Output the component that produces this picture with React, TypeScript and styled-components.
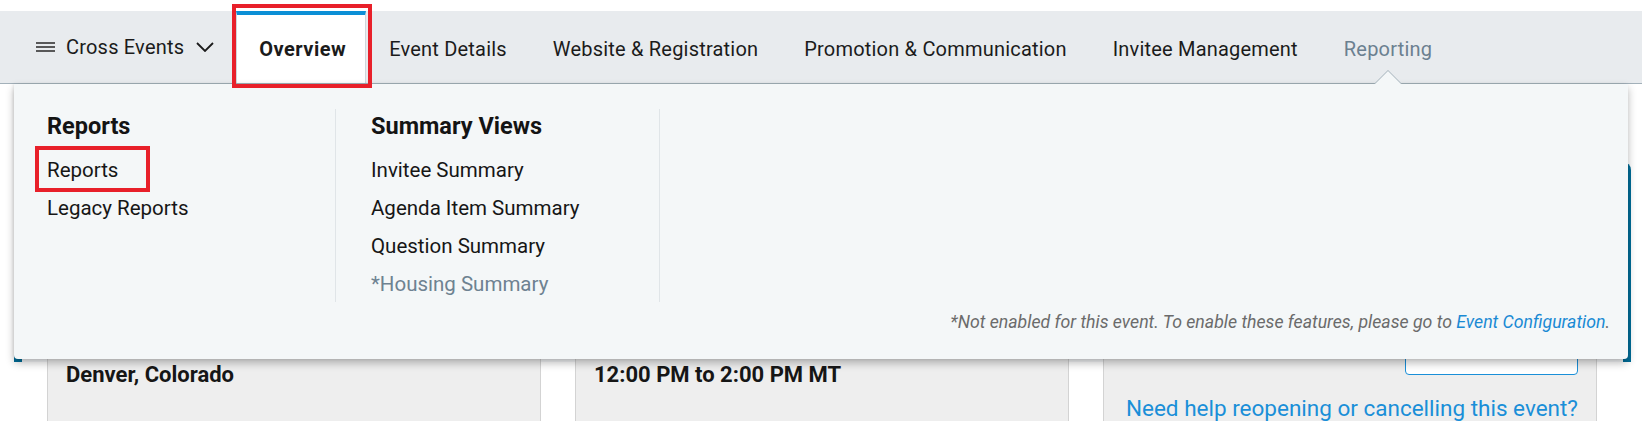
import React from "react";
import styled, { createGlobalStyle } from "styled-components";

const Global = createGlobalStyle`
  html, body { margin: 0; padding: 0; background: #ffffff; }
  body { font-family: Roboto, "Noto Sans", Arial, sans-serif; color: #1b1b1b; }
  * { box-sizing: border-box; }
`;

const Stage = styled.div`
  position: relative;
  width: 1642px;
  height: 423px;
  overflow: hidden;
  background: #ffffff;
  padding-top: 11px;
`;

const NavBar = styled.nav`
  display: flex;
  align-items: stretch;
  height: 73px;
  background: #e8ebee;
  border-bottom: 1px solid #a3b1ba;
  padding-left: 36px;
`;

const CrossEvents = styled.div`
  display: flex;
  align-items: center;
  padding-right: 22px;
  font-size: 20px;
  letter-spacing: 0.2px;
  color: #1b1b1b;
`;

const CrossLabel = styled.span`
  margin: 0 12px 0 11px;
`;

const Tab = styled.div<{ $active?: boolean; $muted?: boolean }>`
  position: relative;
  display: flex;
  align-items: center;
  padding: ${(p) => (p.$active ? "0 19px 0 22px" : "0 22px")};
  font-size: 20px;
  letter-spacing: ${(p) => (p.$active ? "0.5px" : "0.2px")};
  font-weight: ${(p) => (p.$active ? 700 : 400)};
  color: ${(p) => (p.$muted ? "#6b8090" : "#1b1b1b")};
  background: ${(p) => (p.$active ? "#ffffff" : "transparent")};
  border-top: 4px solid ${(p) => (p.$active ? "#0b8fd6" : "transparent")};
  border-left: 1px solid ${(p) => (p.$active ? "#cfd6db" : "transparent")};
  border-right: 1px solid ${(p) => (p.$active ? "#cfd6db" : "transparent")};
`;

const Caret = styled.span`
  position: absolute;
  left: 50%;
  bottom: -1px;
  width: 0;
  height: 0;
  transform: translateX(-50%);
  border-left: 14px solid transparent;
  border-right: 14px solid transparent;
  border-bottom: 14px solid #a3b1ba;
  z-index: 6;

  &::after {
    content: "";
    position: absolute;
    left: -13px;
    top: 1px;
    width: 0;
    height: 0;
    border-left: 13px solid transparent;
    border-right: 13px solid transparent;
    border-bottom: 13px solid #f4f7f8;
  }
`;

/* ---------- page behind the menu ---------- */

const PageFrame = styled.section`
  margin: 78px 11px 0 14px;
  height: 200px;
  padding: 130px 26px 0 25px;
  background: #f4f6f8;
  border-left: 8px solid #006d98;
  border-right: 8px solid #006d98;
  border-top-right-radius: 8px;
`;

const CardRow = styled.div`
  display: grid;
  grid-template-columns: repeat(3, 1fr);
  gap: 34px;
  height: 100%;
`;

const Card = styled.div<{ $end?: boolean }>`
  display: flex;
  flex-direction: column;
  align-items: ${(p) => (p.$end ? "flex-end" : "flex-start")};
  padding: ${(p) => (p.$end ? "42px 18px 0 18px" : "69px 18px 0 18px")};
  background: #eeeeee;
  border: 1px solid #d3d3d3;
  border-bottom: none;
`;

const CardValue = styled.div`
  font-size: 22px;
  line-height: 26px;
  font-weight: 700;
  color: #161616;
`;

const OutlineButton = styled.div`
  width: 173px;
  height: 40px;
  background: #ffffff;
  border: 1px solid #1a8fd8;
  border-radius: 4px;
`;

const HelpLink = styled.a`
  margin-top: 20px;
  font-size: 22.5px;
  line-height: 26px;
  color: #1a8fd8;
  text-decoration: none;
`;

/* ---------- the open Reporting menu ---------- */

const Menu = styled.div`
  position: absolute;
  top: 84px;
  left: 14px;
  width: 1614px;
  height: 275px;
  display: flex;
  flex-direction: column;
  background: #f4f7f8;
  border-radius: 0 0 4px 4px;
  box-shadow: 0 4px 8px rgba(0, 0, 0, 0.28), -1px 0 3px rgba(0, 0, 0, 0.08);
  z-index: 5;
`;

const Columns = styled.div`
  display: flex;
  margin-top: 25px;
  height: 193px;
`;

const Column = styled.div<{ $w: number; $pl: number }>`
  width: ${(p) => p.$w}px;
  padding: 3px 0 0 ${(p) => p.$pl}px;
  border-right: 1px solid #e0e5e8;
`;

const Heading = styled.div`
  font-size: 23.5px;
  line-height: 28px;
  font-weight: 700;
  color: #141414;
  margin-bottom: 11px;
`;

const MenuLink = styled.div<{ $disabled?: boolean }>`
  font-size: 20.5px;
  line-height: 38px;
  color: ${(p) => (p.$disabled ? "#6e8291" : "#161616")};
`;

const Footnote = styled.div`
  margin-top: 10px;
  padding-right: 18px;
  text-align: right;
  font-size: 17.7px;
  line-height: 20px;
  font-style: italic;
  color: #6b6b6b;

  a {
    color: #1a8ad4;
    text-decoration: none;
  }
`;

/* ---------- red annotation boxes ---------- */

const Highlight = styled.div<{ $x: number; $y: number; $w: number; $h: number }>`
  position: absolute;
  left: ${(p) => p.$x}px;
  top: ${(p) => p.$y}px;
  width: ${(p) => p.$w}px;
  height: ${(p) => p.$h}px;
  border: 4px solid #e8202a;
  pointer-events: none;
  z-index: 10;
`;

const Hamburger = () => (
  <svg width="19" height="10" viewBox="0 0 19 10" aria-hidden="true">
    <g stroke="#333" strokeWidth="1.6">
      <line x1="0" y1="1" x2="19" y2="1" />
      <line x1="0" y1="5" x2="19" y2="5" />
      <line x1="0" y1="9" x2="19" y2="9" />
    </g>
  </svg>
);

const Chevron = () => (
  <svg width="18" height="10" viewBox="0 0 18 10" aria-hidden="true">
    <polyline points="1,1 9,9 17,1" fill="none" stroke="#1b1b1b" strokeWidth="1.8" />
  </svg>
);

const tabs = [
  "Event Details",
  "Website & Registration",
  "Promotion & Communication",
  "Invitee Management",
];

export default function App() {
  return (
    <>
      <Global />
      <Stage>
        <NavBar>
          <CrossEvents>
            <Hamburger />
            <CrossLabel>Cross Events</CrossLabel>
            <Chevron />
          </CrossEvents>
          <Tab $active>Overview</Tab>
          {tabs.map((t) => (
            <Tab key={t}>{t}</Tab>
          ))}
          <Tab $muted>
            Reporting
            <Caret />
          </Tab>
        </NavBar>

        <PageFrame>
          <CardRow>
            <Card>
              <CardValue>Denver, Colorado</CardValue>
            </Card>
            <Card>
              <CardValue>12:00 PM to 2:00 PM MT</CardValue>
            </Card>
            <Card $end>
              <OutlineButton />
              <HelpLink href="#">Need help reopening or cancelling this event?</HelpLink>
            </Card>
          </CardRow>
        </PageFrame>

        <Menu>
          <Columns>
            <Column $w={322} $pl={33}>
              <Heading>Reports</Heading>
              <MenuLink>Reports</MenuLink>
              <MenuLink>Legacy Reports</MenuLink>
            </Column>
            <Column $w={324} $pl={35}>
              <Heading>Summary Views</Heading>
              <MenuLink>Invitee Summary</MenuLink>
              <MenuLink>Agenda Item Summary</MenuLink>
              <MenuLink>Question Summary</MenuLink>
              <MenuLink $disabled>*Housing Summary</MenuLink>
            </Column>
          </Columns>
          <Footnote>
            *Not enabled for this event. To enable these features, please go to{" "}
            <a href="#">Event Configuration</a>.
          </Footnote>
        </Menu>

        <Highlight $x={232} $y={4} $w={140} $h={84} />
        <Highlight $x={35} $y={146} $w={115} $h={46} />
      </Stage>
    </>
  );
}
